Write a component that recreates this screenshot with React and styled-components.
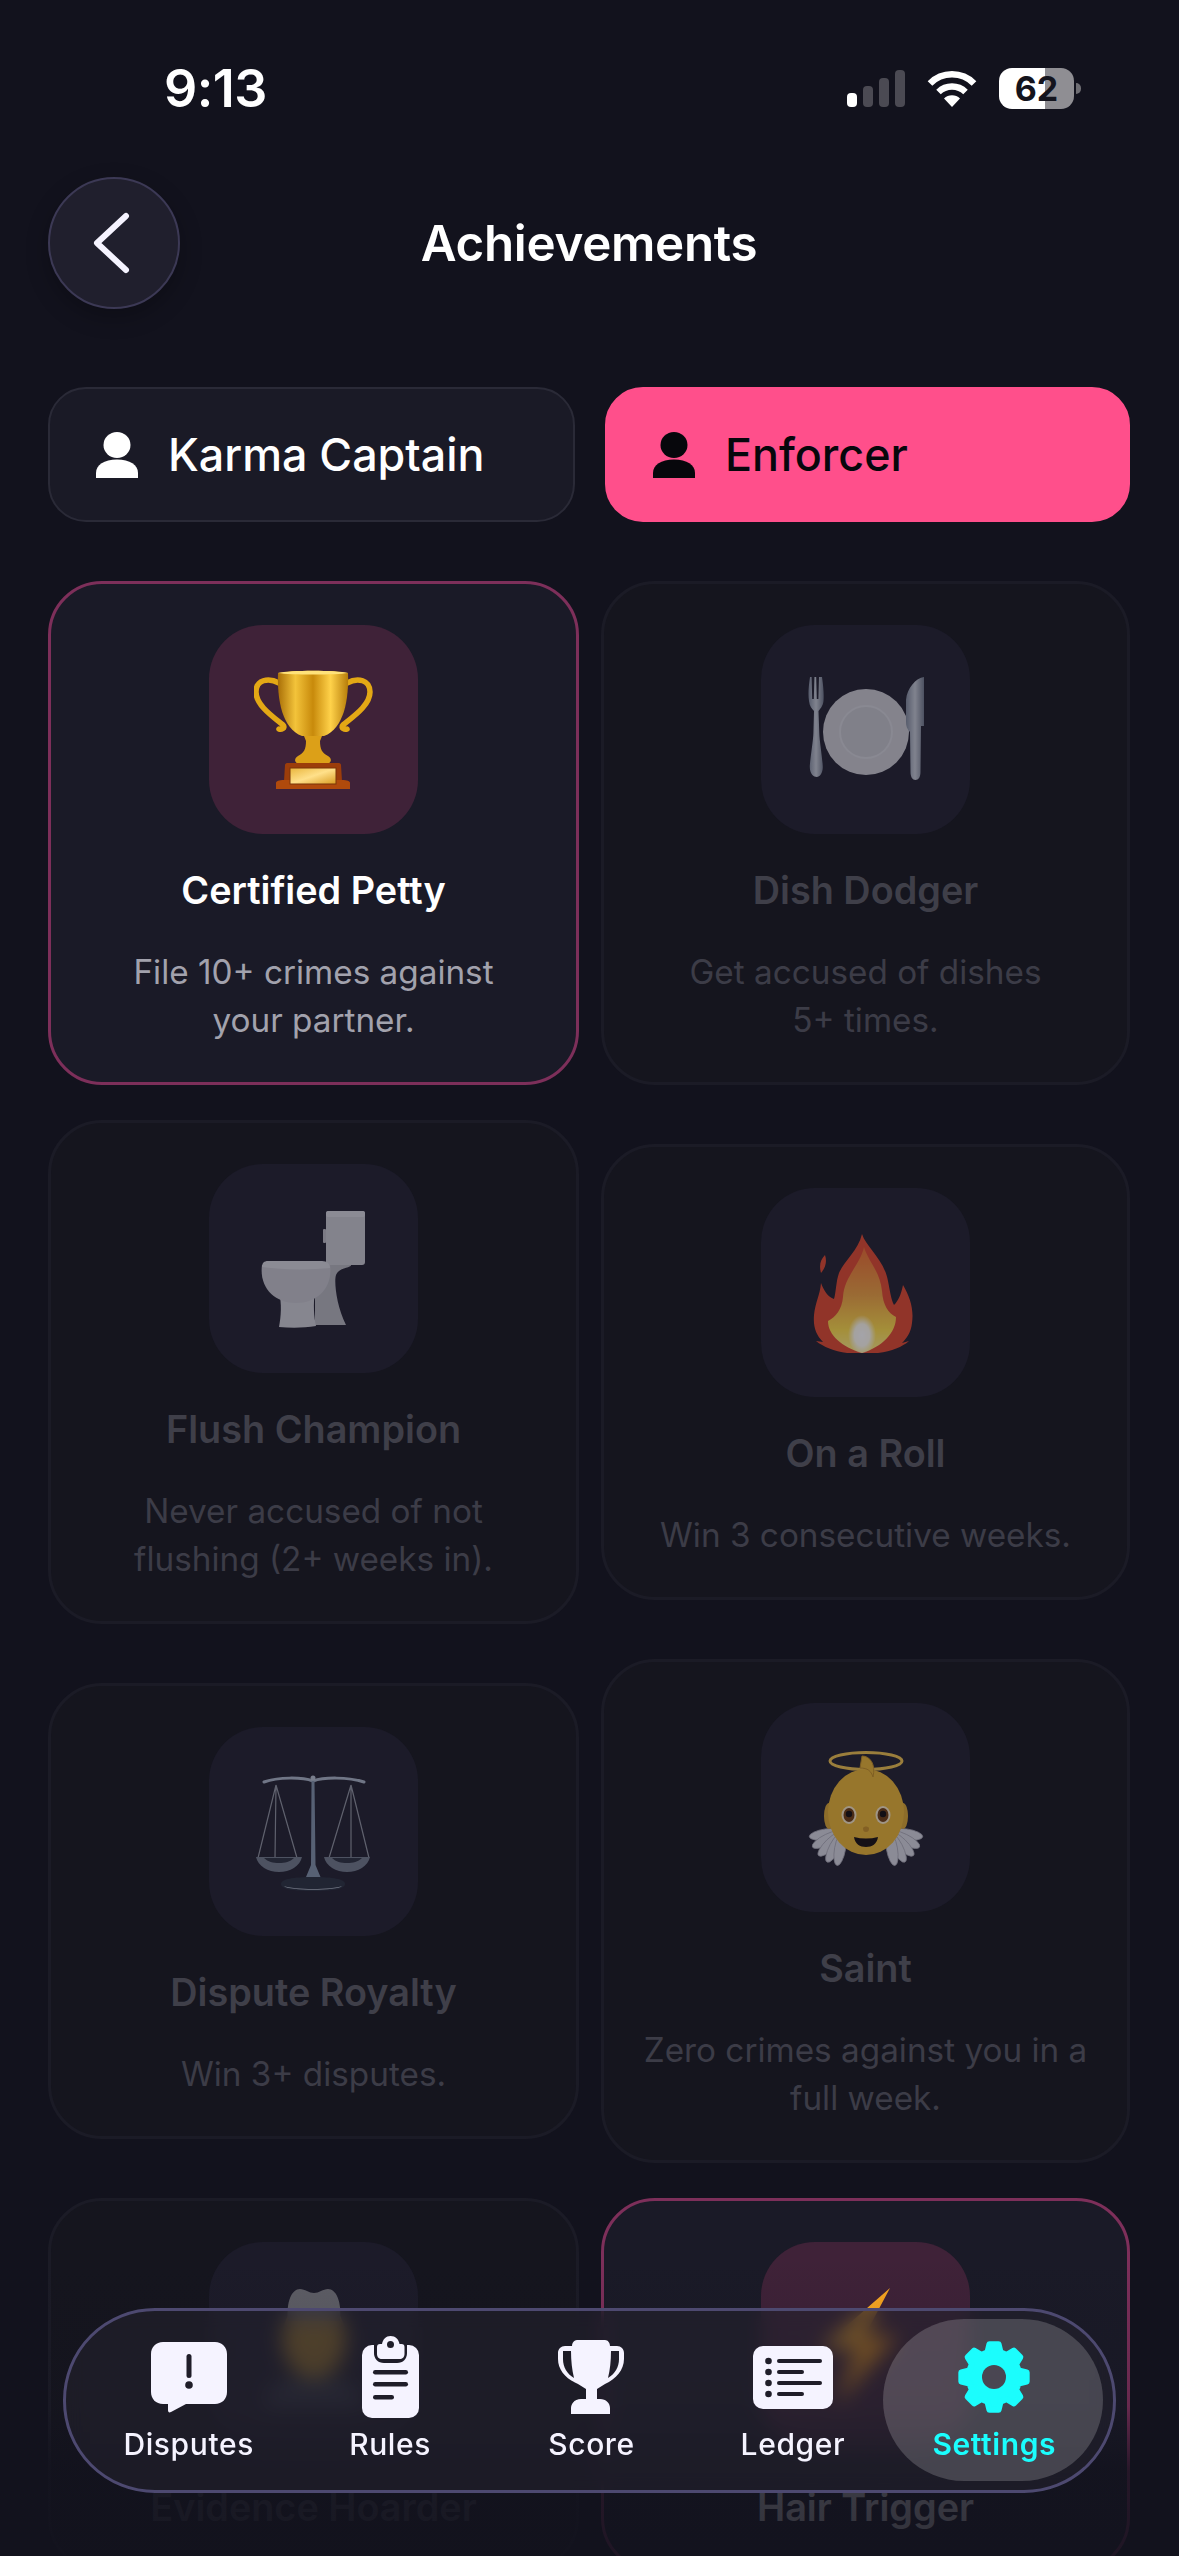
import React from "react"
import styled, { createGlobalStyle } from "styled-components"

const GlobalStyle = createGlobalStyle`
  html, body {
    margin: 0;
    padding: 0;
    background: #12121d;
    overflow: hidden;
  }
  * {
    box-sizing: border-box;
  }
`

const Screen = styled.div`
  position: relative;
  width: 1179px;
  height: 2556px;
  overflow: hidden;
  background: #12121d;
  font-family: Inter, "Noto Sans", sans-serif;
  color: #fff;
`

const StatusBar = styled.div`
  display: flex;
  align-items: center;
  justify-content: space-between;
  height: 176px;
  padding: 0 98px 0 164px;
`

const Time = styled.div`
  font-size: 52px;
  font-weight: 600;
  letter-spacing: -0.5px;
`

const StatusIcons = styled.div`
  display: flex;
  align-items: center;
  gap: 22px;
`

const Bars = styled.div`
  display: flex;
  align-items: flex-end;
  gap: 6px;
  height: 37px;
`

const Bar = styled.div`
  width: 10px;
  height: ${p => p.$h}px;
  border-radius: 4px;
  background: ${p => (p.$on ? "#fff" : "#4b4a53")};
`

const Battery = styled.div`
  position: relative;
  display: flex;
  align-items: center;
  justify-content: center;
  width: 75px;
  height: 41px;
  margin-right: 7px;
  border-radius: 13px;
  overflow: visible;
  background: linear-gradient(90deg, #fff 0 62%, #8f8e93 62% 100%);
  color: #14141d;
  font-size: 34px;
  font-weight: 700;
  &::after {
    content: "";
    position: absolute;
    right: -7px;
    top: 15px;
    width: 5px;
    height: 11px;
    border-radius: 0 6px 6px 0;
    background: #6f6e74;
  }
`

const Header = styled.div`
  display: grid;
  grid-template-columns: 132px 1fr 132px;
  align-items: center;
  margin: 1px 49px 0 48px;
`

const BackButton = styled.button`
  display: flex;
  align-items: center;
  justify-content: center;
  width: 132px;
  height: 132px;
  padding: 0 6px 0 0;
  border-radius: 50%;
  border: 2px solid #3c3955;
  background: #201f2d;
  box-shadow: 0 8px 22px rgba(0, 0, 0, 0.25);
`

const Title = styled.h1`
  margin: 0;
  text-align: center;
  font-size: 49.300px;
  font-weight: 600;
  letter-spacing: -0.3px;
`

const Tabs = styled.div`
  display: grid;
  grid-template-columns: 527px 1fr;
  gap: 30px;
  margin: 78px 49px 0 48px;
`

const Tab = styled.div`
  display: flex;
  align-items: center;
  gap: 30px;
  height: 135px;
  padding-left: 46px;
  border-radius: 38px;
  border: 2px solid ${p => (p.$active ? "#ff4f8b" : "#2a2a37")};
  background: ${p => (p.$active ? "#ff4f8b" : "#1a1a26")};
  color: ${p => (p.$active ? "#07070c" : "#fff")};
  font-size: 44.800px;
  font-weight: 500;
`

const Grid = styled.div`
  display: grid;
  grid-template-columns: 531px 1fr;
  column-gap: 22px;
  row-gap: 35px;
  align-items: center;
  margin: 59px 49px 0 48px;
`

const Card = styled.div`
  display: flex;
  flex-direction: column;
  align-items: center;
  padding: 41px 20px 38px;
  border-radius: 54px;
  border: 3px solid ${p => (p.$unlocked ? "#7d2f5a" : "#1b1b26")};
  background: ${p => (p.$unlocked ? "#1a1a27" : "#15151e")};
  text-align: center;
`

const EmojiBox = styled.div`
  display: flex;
  align-items: center;
  justify-content: center;
  width: 209px;
  height: 209px;
  border-radius: 54px;
  background: ${p => (p.$unlocked ? "#3f2238" : "#1c1b29")};
  & > svg {
    opacity: ${p => (p.$unlocked ? 1 : 0.6)};
  }
`

const Name = styled.div`
  margin-top: 32px;
  font-size: 37.800px;
  line-height: 48px;
  font-weight: 600;
  color: ${p => (p.$unlocked ? "#fff" : "#3f3f49")};
`

const Desc = styled.div`
  margin-top: 34px;
  font-size: 33.300px;
  line-height: 48px;
  white-space: pre-line;
  color: ${p => (p.$unlocked ? "#a2a2ad" : "#3c3c47")};
`

const BottomFade = styled.div`
  position: absolute;
  left: 0;
  right: 0;
  bottom: 0;
  height: 300px;
  background: linear-gradient(180deg, rgba(18, 18, 29, 0) 0%, rgba(18, 18, 29, 0.2) 50%, rgba(18, 18, 29, 0.82) 72%, rgba(18, 18, 29, 0.88) 100%);
`

const Nav = styled.nav`
  position: absolute;
  left: 63px;
  top: 2308px;
  display: grid;
  grid-template-columns: repeat(5, 1fr);
  width: 1053px;
  height: 185px;
  padding: 0 18px 0 22px;
  border-radius: 92px;
  border: 3px solid #4d4970;
  background: rgba(35, 33, 45, 0.6);
  backdrop-filter: blur(10px);
`

const NavItem = styled.div`
  position: relative;
  display: flex;
  flex-direction: column;
  align-items: center;
  color: ${p => (p.$active ? "#1bfdfd" : "#f5f3ff")};
  font-size: 30px;
  font-weight: ${p => (p.$active ? 600 : 500)};
  letter-spacing: 0.6px;
  ${p =>
    p.$active &&
    `&::before {
      content: "";
      position: absolute;
      left: -11px;
      right: -8px;
      top: 8px;
      bottom: 9px;
      border-radius: 81px;
      background: rgba(255, 255, 255, 0.18);
    }`}
`

const NavIconSlot = styled.div`
  position: relative;
  display: flex;
  align-items: center;
  justify-content: center;
  height: 82px;
  margin-top: 25px;
`

const NavLabel = styled.div`
  position: relative;
  margin-top: 4px;
  line-height: 44px;
`

const PersonIcon = () => (
  <svg width="42" height="46" viewBox="0 0 42 46" fill="currentColor">
    <ellipse cx="21" cy="13" rx="13.5" ry="13" />
    <path d="M0 46v-5C0 33 8 27.5 21 27.5S42 33 42 41v5z" />
  </svg>
)

const Wifi = () => (
  <svg width="50" height="37" viewBox="0 0 50 37" fill="none" stroke="#fff" strokeWidth="6.5">
    <path d="M3 13.5A31 31 0 0 1 47 13.5" />
    <path d="M11.5 22A19.5 19.5 0 0 1 38.5 22" />
    <path d="M17 28.5A11.5 11.5 0 0 1 33 28.5L25 37Z" fill="#fff" stroke="none" />
  </svg>
)

const Chevron = () => (
  <svg width="40" height="62" viewBox="0 0 40 62" fill="none" stroke="#f5f3ff" strokeWidth="6" strokeLinecap="round" strokeLinejoin="round">
    <path d="M35 4L6 31l29 27" />
  </svg>
)

const TrophyEmoji = () => (
  <svg width="120" height="120" viewBox="0 0 120 120" fill="none">
    <defs>
      <linearGradient id="cup" x1="0" x2="1" y1="0" y2="0">
        <stop offset="0" stopColor="#a96f07" />
        <stop offset="0.25" stopColor="#f3c33a" />
        <stop offset="0.5" stopColor="#c88a0b" />
        <stop offset="0.75" stopColor="#ffd24a" />
        <stop offset="1" stopColor="#b77d0a" />
      </linearGradient>
      <linearGradient id="plaque" x1="0" x2="1" y1="0" y2="1">
        <stop offset="0" stopColor="#e9b53c" />
        <stop offset="0.5" stopColor="#ffe08a" />
        <stop offset="1" stopColor="#d99d22" />
      </linearGradient>
    </defs>
    <path d="M25 13C14 7 2 10 2 22c0 13 16 24 27 33 3 3-2 5-4 4" stroke="#e3a815" strokeWidth="5.5" strokeLinecap="round" />
    <path d="M93 13c11-6 23-3 23 9 0 13-16 24-27 33-3 3 2 5 4 4" stroke="#e3a815" strokeWidth="5.5" strokeLinecap="round" />
    <path d="M24 3C36 0 82 0 94 3c1 26-4 56-24 63H48C28 59 23 29 24 3z" fill="url(#cup)" />
    <path d="M24 3C36 0 82 0 94 3 82 5 36 5 24 3z" fill="#ffe27a" />
    <path d="M50 66h18l-2 5c0 8 2 12 8 15 4 2 4 7-1 8H45c-5-1-5-6-1-8 6-3 8-7 8-15z" fill="#dca018" />
    <path d="M31 95c0-1 1-2 2-2h52c1 0 2 1 2 2l1 16H30z" fill="#9c3d0a" />
    <path d="M22 113c0-2 3-3 8-3h58c5 0 8 1 8 3v6H22z" fill="#b04a0c" />
    <rect x="36" y="98" width="46" height="16" fill="url(#plaque)" stroke="#7a3408" strokeWidth="1" />
  </svg>
)

const PlateEmoji = () => (
  <svg width="120" height="120" viewBox="0 0 120 120">
    <defs>
      <linearGradient id="steel" x1="0" x2="1" y1="0" y2="0">
        <stop offset="0" stopColor="#7f889a" />
        <stop offset="0.5" stopColor="#c3c8d2" />
        <stop offset="1" stopColor="#6f7788" />
      </linearGradient>
    </defs>
    <path d="M4 7h1.600l.6 22h1.600l.6-22h1.800l.6 22h1.600l.6-22H16c1.500 10 2 18 1.500 24-.5 5-3.500 8-5 10l.8 22c.2 8 3.500 28 3.500 34 0 6-3 10-6 10s-7-3-7-10c0-6 3.400-26 3.600-34l.6-22c-2-2-4.500-5-5-10C2 25 2.500 17 4 7z" fill="url(#steel)" />
    <circle cx="60" cy="62" r="43" fill="#c9c9cf" />
    <circle cx="60" cy="62" r="26" fill="#c3c3c9" stroke="#d2d2d8" strokeWidth="2" />
    <path d="M118 7v49h-3l-.5 46c0 5-2 8-5 8s-5-3-5-8l-.5-40c-3-3-4-6-4-10V30c1-12 10-22 18-23z" fill="url(#steel)" />
  </svg>
)

const ToiletEmoji = () => (
  <svg width="120" height="120" viewBox="0 0 120 120">
    <path d="M61 56h36c1 3-12 2-15 10-2 6 0 30 10 50H61z" fill="#b4b4bb" />
    <rect x="72" y="2" width="39" height="54" rx="3" fill="#c8c8cf" />
    <rect x="72" y="2" width="39" height="6" rx="2" fill="#d6d6dc" />
    <rect x="69" y="20" width="3" height="14" rx="1" fill="#bcbcc3" />
    <path d="M25 84h36c-2 10-1 24 1 33-12 2-25 2-37 1 2-10 3-24 0-34z" fill="#cdcdd3" />
    <path d="M8 56h68c3 22-12 38-34 38C20 94 5 78 8 56z" fill="#c4c4cb" />
    <path d="M8 58c0-4 2-6 6-6h54c5 0 8 3 8 7-20 2-48 2-68-1z" fill="#d6d6dc" />
  </svg>
)

const FireEmoji = () => (
  <svg width="120" height="120" viewBox="0 0 120 120">
    <defs>
      <linearGradient id="core" x1="0" x2="0" y1="0" y2="1">
        <stop offset="0" stopColor="#ee6a2c" />
        <stop offset="0.45" stopColor="#efa03c" />
        <stop offset="0.78" stopColor="#ffdc45" />
        <stop offset="1" stopColor="#ffef8a" />
      </linearGradient>
      <radialGradient id="glow" cx="0.5" cy="0.55" r="0.5">
        <stop offset="0" stopColor="#fff" />
        <stop offset="0.55" stopColor="#fff" stopOpacity="0.9" />
        <stop offset="1" stopColor="#fff" stopOpacity="0" />
      </radialGradient>
    </defs>
    <path d="M56 1C60 14 78 26 82 48C84 58 85 66 88 72C92 68 95 62 97 52C104 64 108 76 106 90C105 100 100 106 96 110L103 108C94 116 78 121 56 121C36 121 20 116 10 108L17 109C10 102 7 94 8 82C9 70 14 62 15 50C18 58 22 64 28 66C30 60 30 48 33 40C38 28 52 18 56 1Z" fill="#e0452a" />
    <path d="M19 22c2 6 1 12-4 18-2-7-1-13 4-18z" fill="#e0452a" />
    <path d="M58 14C62 28 74 38 76 58C77 72 82 80 90 84C90 100 76 114 56 120C36 114 22 102 22 88C30 84 36 76 37 64C38 44 54 32 58 14Z" fill="url(#core)" />
    <ellipse cx="56" cy="100" rx="14" ry="20" fill="url(#glow)" />
  </svg>
)

const ScalesEmoji = () => (
  <svg width="120" height="120" viewBox="0 0 120 120" fill="none">
    <path d="M10 10C24 5 48 5 59 9 70 5 94 5 110 10" stroke="#a9b3c4" strokeWidth="3" strokeLinecap="round" />
    <circle cx="59" cy="6" r="2.500" fill="#b7c0cf" />
    <path d="M57.500 9h3l1 84 5 12H52l5-12z" fill="#7f90a7" />
    <path d="M22 13L4 86M22 13L21 86M22 13L43 86" stroke="#8d919c" strokeWidth="1.200" />
    <path d="M97 13L75 86M97 13L97 86M97 13L115 86" stroke="#8d919c" strokeWidth="1.200" />
    <path d="M2 85h46c-2 9-12 15-23 15S4 94 2 85z" fill="#6e7787" />
    <path d="M70 85h46c-2 9-12 15-23 15s-21-6-23-15z" fill="#6e7787" />
    <path d="M10 86h30c-4 4-9 5-15 5s-11-1-15-5zM78 86h30c-4 4-9 5-15 5s-11-1-15-5z" fill="#272c3a" />
    <path d="M27 112c0-5 12-7 32-7s32 2 32 7c0 5-12 7-32 7s-32-2-32-7z" fill="#252c3a" />
    <path d="M30 114c10 4 48 4 58 0-4 5-54 5-58 0z" fill="#aeb6c4" />
  </svg>
)

const Wing = ({ flip }) => (
  <g transform={flip ? "translate(120 0) scale(-1 1)" : undefined} fill="#d6d6df" stroke="#a6a6b2" strokeWidth="0.8">
    {[82, 64, 46, 28, 10].map(angle => (
      <ellipse key={angle} cx="37" cy="101" rx="5.500" ry="17" transform={`rotate(${angle} 37 84)`} />
    ))}
  </g>
)

const AngelEmoji = () => (
  <svg width="120" height="120" viewBox="0 0 120 120" fill="none">
    <Wing />
    <Wing flip />
    <ellipse cx="60" cy="13" rx="36" ry="8.500" stroke="#efc04a" strokeWidth="3" />
    <ellipse cx="23" cy="68" rx="5" ry="13" fill="#d9a42c" />
    <ellipse cx="97" cy="68" rx="5" ry="13" fill="#d9a42c" />
    <ellipse cx="60" cy="64" rx="38" ry="43" fill="#eab32f" />
    <path d="M56 8c8 0 14 8 11 21-2-6-5-9-13-9z" fill="#eab32f" stroke="#c18c20" strokeWidth="1" />
    <ellipse cx="43" cy="67" rx="7.500" ry="9" fill="#f7e7c4" />
    <ellipse cx="77" cy="67" rx="7.500" ry="9" fill="#f7e7c4" />
    <ellipse cx="43" cy="67" rx="5.500" ry="7" fill="#6c3a0c" />
    <ellipse cx="77" cy="67" rx="5.500" ry="7" fill="#6c3a0c" />
    <circle cx="43" cy="66" r="3.200" fill="#0c0808" />
    <circle cx="77" cy="66" r="3.200" fill="#0c0808" />
    <path d="M57 80c1-2 5-2 6 0 0 3-1 4-3 4s-3-1-3-4z" fill="#c88f22" />
    <path d="M48 89c8 2 16 2 24 0-1 7-6 10-12 10s-11-3-12-10z" fill="#12090a" />
  </svg>
)

const DetectiveEmoji = () => (
  <svg width="120" height="120" viewBox="0 0 120 120">
    <path d="M10 120c2-20 20-32 50-32s48 12 50 32z" fill="#3f4753" />
    <ellipse cx="60" cy="52" rx="32" ry="40" fill="#f2b52a" />
    <path d="M34 34C32 14 38 2 46 2c5 0 9 4 14 4s9-4 14-4c8 0 14 12 12 32z" fill="#8b8b8f" />
  </svg>
)

const BoltEmoji = () => (
  <svg width="120" height="120" viewBox="0 0 120 120">
    <defs>
      <linearGradient id="bolt" x1="0" x2="1" y1="0" y2="1">
        <stop offset="0" stopColor="#ffc93a" />
        <stop offset="1" stopColor="#f57c00" />
      </linearGradient>
    </defs>
    <path d="M84 1L14 62l36-2-20 58 62-70-34 2z" fill="url(#bolt)" />
  </svg>
)

const DisputesIcon = () => (
  <svg width="76" height="71" viewBox="0 0 76 71">
    <path fill="currentColor" d="M12 0h52c7 0 12 5 12 12v38c0 7-5 12-12 12H35L20 70c-2 1-3 0-3-2v-6h-5C5 62 0 57 0 50V12C0 5 5 0 12 0z" />
    <rect x="35.500" y="12" width="5" height="24" rx="2.500" fill="#1f1d29" />
    <circle cx="38" cy="43" r="3.800" fill="#1f1d29" />
  </svg>
)

const RulesIcon = () => (
  <svg width="57" height="82" viewBox="0 0 57 82">
    <rect y="9" width="57" height="73" rx="10" fill="currentColor" />
    <path d="M12 9v8c0 6 4 10 10 10h13c6 0 10-4 10-10V9z" fill="#1f1d29" />
    <path fill="currentColor" fillRule="evenodd" d="M28.500 0c5 0 8 3 9 8h2c2 0 3 1 3 3v7c0 3-2 5-5 5H20c-3 0-5-2-5-5v-7c0-2 1-3 3-3h2c1-5 4-8 8.500-8zm0 5a3.500 3.500 0 1 0 0 7 3.500 3.500 0 0 0 0-7z" />
    <rect x="11" y="34" width="35" height="4.500" rx="2.200" fill="#1f1d29" />
    <rect x="11" y="46" width="35" height="4.500" rx="2.200" fill="#1f1d29" />
    <rect x="11" y="59" width="21" height="4.500" rx="2.200" fill="#1f1d29" />
  </svg>
)

const ScoreIcon = () => (
  <svg width="66" height="74" viewBox="0 0 66 74">
    <path fill="currentColor" fillRule="evenodd" d="M14 6c0-3 2-6 5-6h28c3 0 5 3 5 6h7c4 0 7 3 7 7v6c0 11-8 20-19 25l-8 5v10h3c6 0 10 4 10 9v6H13v-6c0-5 4-9 10-9h5V49l-8-5C8 39 0 30 0 19v-6c0-4 3-7 7-7zM5 11v8c0 8 4 15 11 19-2-8-3-17-3-27zm56 0h-8c0 10-1 19-3 27 7-4 11-11 11-19z" />
  </svg>
)

const LedgerIcon = () => (
  <svg width="80" height="63" viewBox="0 0 80 63">
    <rect width="80" height="63" rx="10" fill="currentColor" />
    {[15, 26, 37, 48].map((y, i) => (
      <g key={y} fill="#1f1d29">
        <circle cx="15.500" cy={y} r="3.300" />
        <rect x="24" y={y - 2} width={i % 2 ? 27 : 45} height="4" rx="2" />
      </g>
    ))}
  </svg>
)

function gearPath() {
  const c = 36
  const point = (deg, r) => {
    const a = ((deg - 90) * Math.PI) / 180
    return `${(c + r * Math.cos(a)).toFixed(2)} ${(c + r * Math.sin(a)).toFixed(2)}`
  }
  let d = ""
  for (let i = 0; i < 8; i += 1) {
    const a = i * 45
    d += `${i ? "L" : "M"}${point(a - 15, 25.5)} L${point(a - 8, 33)} L${point(a + 8, 33)} L${point(a + 15, 25.5)} `
  }
  return `${d}Z`
}

const GearIcon = () => (
  <svg width="72" height="72" viewBox="0 0 72 72">
    <path d={gearPath()} fill="currentColor" stroke="currentColor" strokeWidth="6" strokeLinejoin="round" />
    <circle cx="36" cy="36" r="12" fill="#4a4652" />
  </svg>
)

const achievements = [
  { name: "Certified Petty", desc: "File 10+ crimes against\nyour partner.", Emoji: TrophyEmoji, unlocked: true },
  { name: "Dish Dodger", desc: "Get accused of dishes\n5+ times.", Emoji: PlateEmoji },
  { name: "Flush Champion", desc: "Never accused of not\nflushing (2+ weeks in).", Emoji: ToiletEmoji },
  { name: "On a Roll", desc: "Win 3 consecutive weeks.", Emoji: FireEmoji },
  { name: "Dispute Royalty", desc: "Win 3+ disputes.", Emoji: ScalesEmoji },
  { name: "Saint", desc: "Zero crimes against you in a\nfull week.", Emoji: AngelEmoji },
  { name: "Evidence Hoarder", Emoji: DetectiveEmoji },
  { name: "Hair Trigger", Emoji: BoltEmoji, unlocked: true },
]

const navItems = [
  { label: "Disputes", Icon: DisputesIcon },
  { label: "Rules", Icon: RulesIcon },
  { label: "Score", Icon: ScoreIcon },
  { label: "Ledger", Icon: LedgerIcon },
  { label: "Settings", Icon: GearIcon, active: true },
]

export default function App() {
  return (
    <Screen>
      <GlobalStyle />
      <StatusBar>
        <Time>9:13</Time>
        <StatusIcons>
          <Bars>
            <Bar $h={14} $on />
            <Bar $h={21} />
            <Bar $h={29} />
            <Bar $h={37} />
          </Bars>
          <Wifi />
          <Battery>62</Battery>
        </StatusIcons>
      </StatusBar>
      <Header>
        <BackButton>
          <Chevron />
        </BackButton>
        <Title>Achievements</Title>
      </Header>
      <Tabs>
        <Tab>
          <PersonIcon />
          Karma Captain
        </Tab>
        <Tab $active>
          <PersonIcon />
          Enforcer
        </Tab>
      </Tabs>
      <Grid>
        {achievements.map(({ name, desc, Emoji, unlocked }) => (
          <Card key={name} $unlocked={unlocked}>
            <EmojiBox $unlocked={unlocked}>
              <Emoji />
            </EmojiBox>
            <Name $unlocked={unlocked}>{name}</Name>
            {desc && <Desc $unlocked={unlocked}>{desc}</Desc>}
          </Card>
        ))}
      </Grid>
      <BottomFade />
      <Nav>
        {navItems.map(({ label, Icon, active }) => (
          <NavItem key={label} $active={active}>
            <NavIconSlot>
              <Icon />
            </NavIconSlot>
            <NavLabel>{label}</NavLabel>
          </NavItem>
        ))}
      </Nav>
    </Screen>
  )
}
